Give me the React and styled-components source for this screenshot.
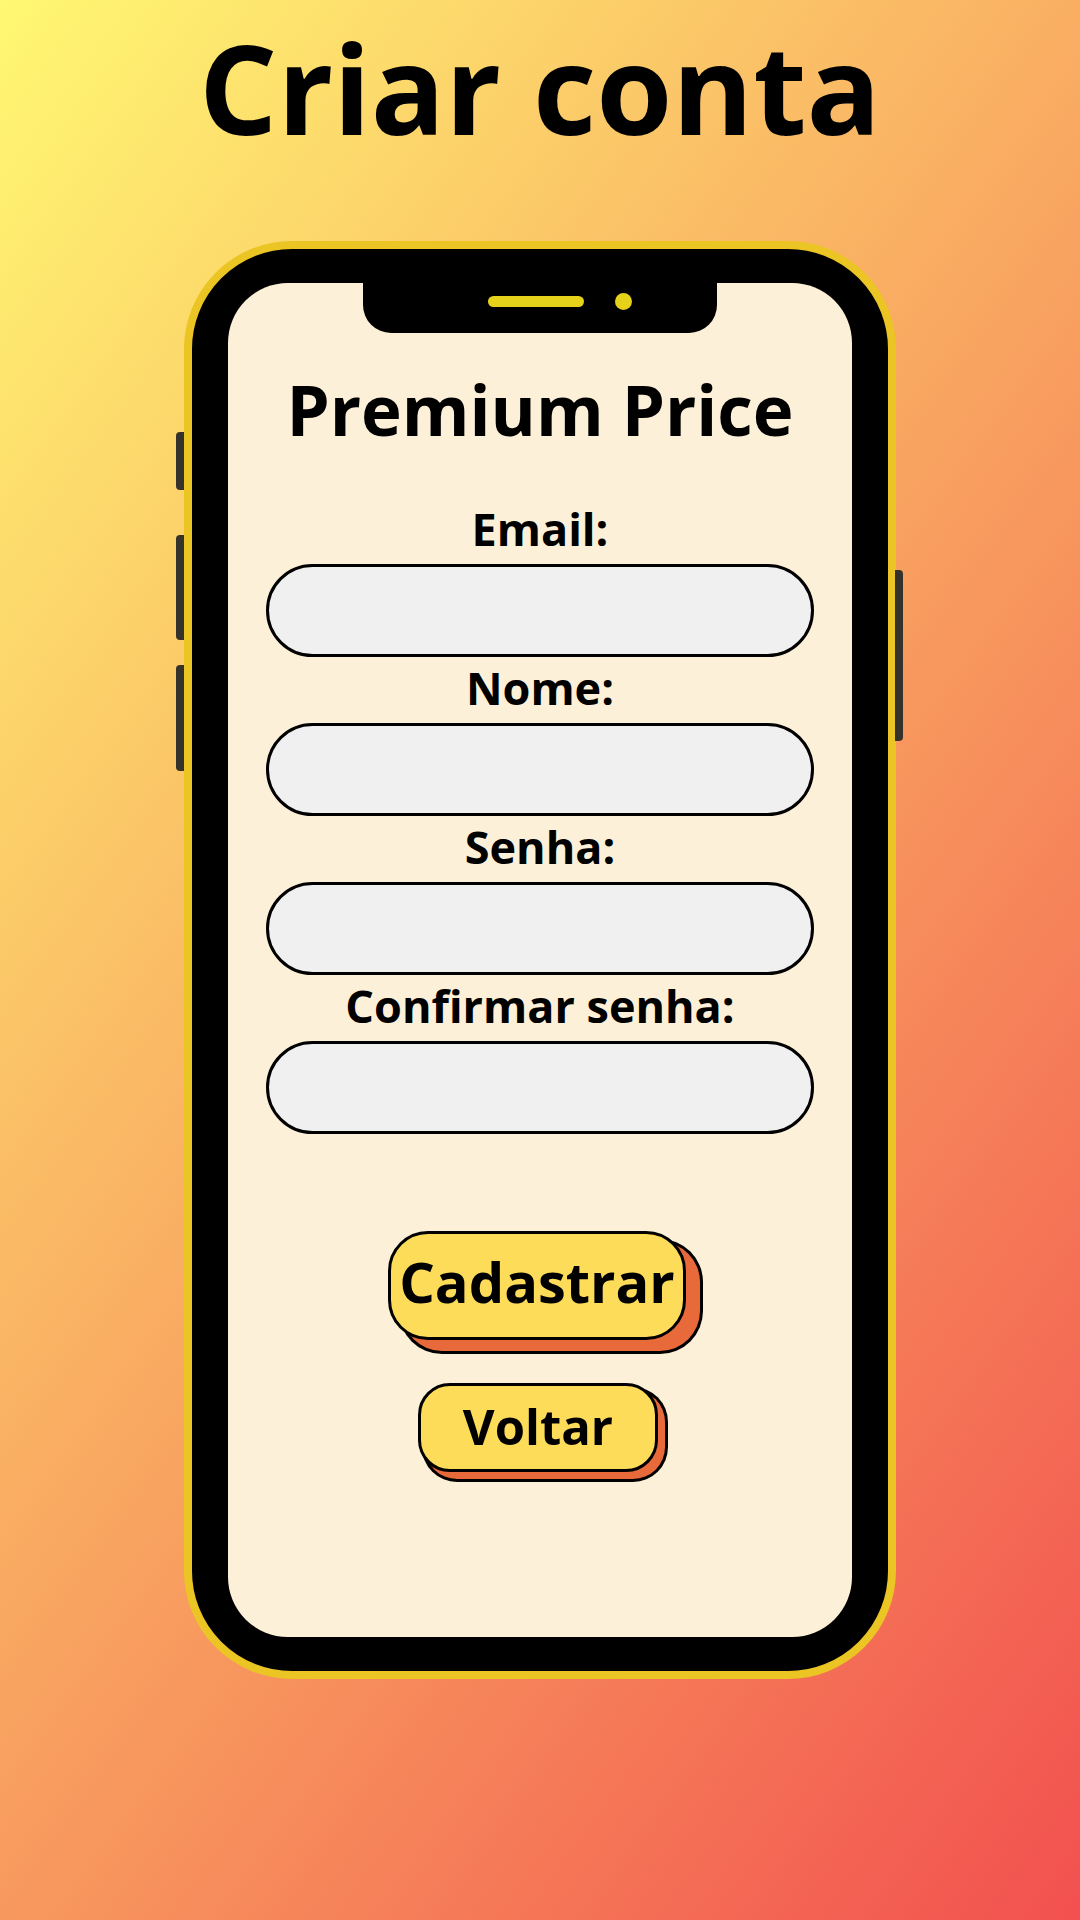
import React from "react";
import styled, { createGlobalStyle } from "styled-components";

const GlobalStyle = createGlobalStyle`
  body {
    margin: 0;
    font-family: "Open Sans", "Noto Sans", sans-serif;
  }
`;

// Page background and heading

const Page = styled.div`
  width: 1080px;
  min-height: 1920px;
  background: linear-gradient(126deg, #fff872 0%, #f2504f 100%);
  display: flex;
  flex-direction: column;
  align-items: center;
  overflow: hidden;
`;

const PageTitle = styled.h1`
  margin: 27px 0 0;
  font-size: 123px;
  line-height: 122px;
  font-weight: 700;
  color: #000;
`;

// Phone body

const Phone = styled.div`
  position: relative;
  box-sizing: border-box;
  margin-top: 92px;
  width: 712px;
  height: 1438px;
  padding: 34px 36px;
  background: #000;
  border: 8px solid #eac523;
  border-radius: 108px;
`;

const SideButton = styled.span`
  position: absolute;
  width: 8px;
  background: #35322b;
  top: ${(p) => p.top}px;
  height: ${(p) => p.size}px;
  ${(p) => (p.right ? "right: -15px;" : "left: -16px;")}
  border-radius: ${(p) => (p.right ? "0 4px 4px 0" : "4px 0 0 4px")};
`;

const Screen = styled.div`
  position: relative;
  box-sizing: border-box;
  height: 100%;
  background: #fdf0d9;
  border-radius: 60px;
  padding-top: 92px;
  display: flex;
  flex-direction: column;
  align-items: center;
`;

const Notch = styled.div`
  position: absolute;
  top: 0;
  left: 135px;
  box-sizing: border-box;
  width: 354px;
  height: 50px;
  padding: 10px 0 0 125px;
  background: #000;
  border-radius: 0 0 28px 28px;
  display: flex;
  align-items: flex-start;
  gap: 31px;
`;

const Speaker = styled.span`
  margin-top: 3px;
  width: 96px;
  height: 11px;
  border-radius: 6px;
  background: #e6d21b;
`;

const Camera = styled.span`
  width: 17px;
  height: 17px;
  border-radius: 50%;
  background: #e6d21b;
`;

// Form

const ScreenTitle = styled.h2`
  margin: 0;
  font-size: 69px;
  line-height: 68px;
  font-weight: 700;
  color: #000;
`;

const Form = styled.form`
  margin-top: 64px;
  display: flex;
  flex-direction: column;
  gap: 9px;
`;

const Field = styled.div`
  display: flex;
  flex-direction: column;
  align-items: center;
  gap: 13px;
`;

const Label = styled.label`
  font-size: 45px;
  line-height: 44px;
  font-weight: 700;
  color: #000;
`;

const Input = styled.input`
  box-sizing: border-box;
  width: 548px;
  height: 93px;
  flex-shrink: 0;
  border: 3px solid #000;
  border-radius: 47px;
  background: #f0f0f0;
  padding: 0 36px;
  font-family: inherit;
  font-size: 32px;
  outline: none;
`;

const Actions = styled.div`
  margin-top: 97px;
  display: flex;
  flex-direction: column;
  align-items: center;
  gap: 43px;
`;

const Button = styled.button`
  box-sizing: border-box;
  width: ${(p) => (p.big ? 298 : 240)}px;
  height: ${(p) => (p.big ? 109 : 89)}px;
  margin-right: ${(p) => (p.big ? 6 : 4)}px;
  padding: 0 0 ${(p) => (p.big ? 10 : 3)}px;
  border: 3px solid #000;
  border-radius: ${(p) => (p.big ? 40 : 32)}px;
  background: #fddc5a;
  box-shadow: ${(p) =>
    p.big
      ? "14px 11px 0 0 #e8693a, 14px 11px 0 3px #000"
      : "7px 7px 0 0 #e8693a, 7px 7px 0 3px #000"};
  font-family: inherit;
  font-weight: 700;
  font-size: ${(p) => (p.big ? 56 : 49)}px;
  line-height: 1;
  color: #000;
  display: flex;
  align-items: center;
  justify-content: center;
  cursor: pointer;
`;

const fields = [
  { id: "email", label: "Email:", type: "email" },
  { id: "nome", label: "Nome:", type: "text" },
  { id: "senha", label: "Senha:", type: "password" },
  { id: "confirmar", label: "Confirmar senha:", type: "password" },
];

const App = () => {
  return (
    <Page>
      <GlobalStyle />
      <PageTitle>Criar conta</PageTitle>

      <Phone>
        <SideButton top={183} size={58} />
        <SideButton top={286} size={105} />
        <SideButton top={416} size={106} />
        <SideButton right top={321} size={171} />

        <Screen>
          <Notch>
            <Speaker />
            <Camera />
          </Notch>

          <ScreenTitle>Premium Price</ScreenTitle>

          <Form onSubmit={(e) => e.preventDefault()}>
            {fields.map((f) => (
              <Field key={f.id}>
                <Label htmlFor={f.id}>{f.label}</Label>
                <Input id={f.id} type={f.type} />
              </Field>
            ))}
          </Form>

          <Actions>
            <Button big type="button">Cadastrar</Button>
            <Button type="button">Voltar</Button>
          </Actions>
        </Screen>
      </Phone>
    </Page>
  );
};

export default App;
